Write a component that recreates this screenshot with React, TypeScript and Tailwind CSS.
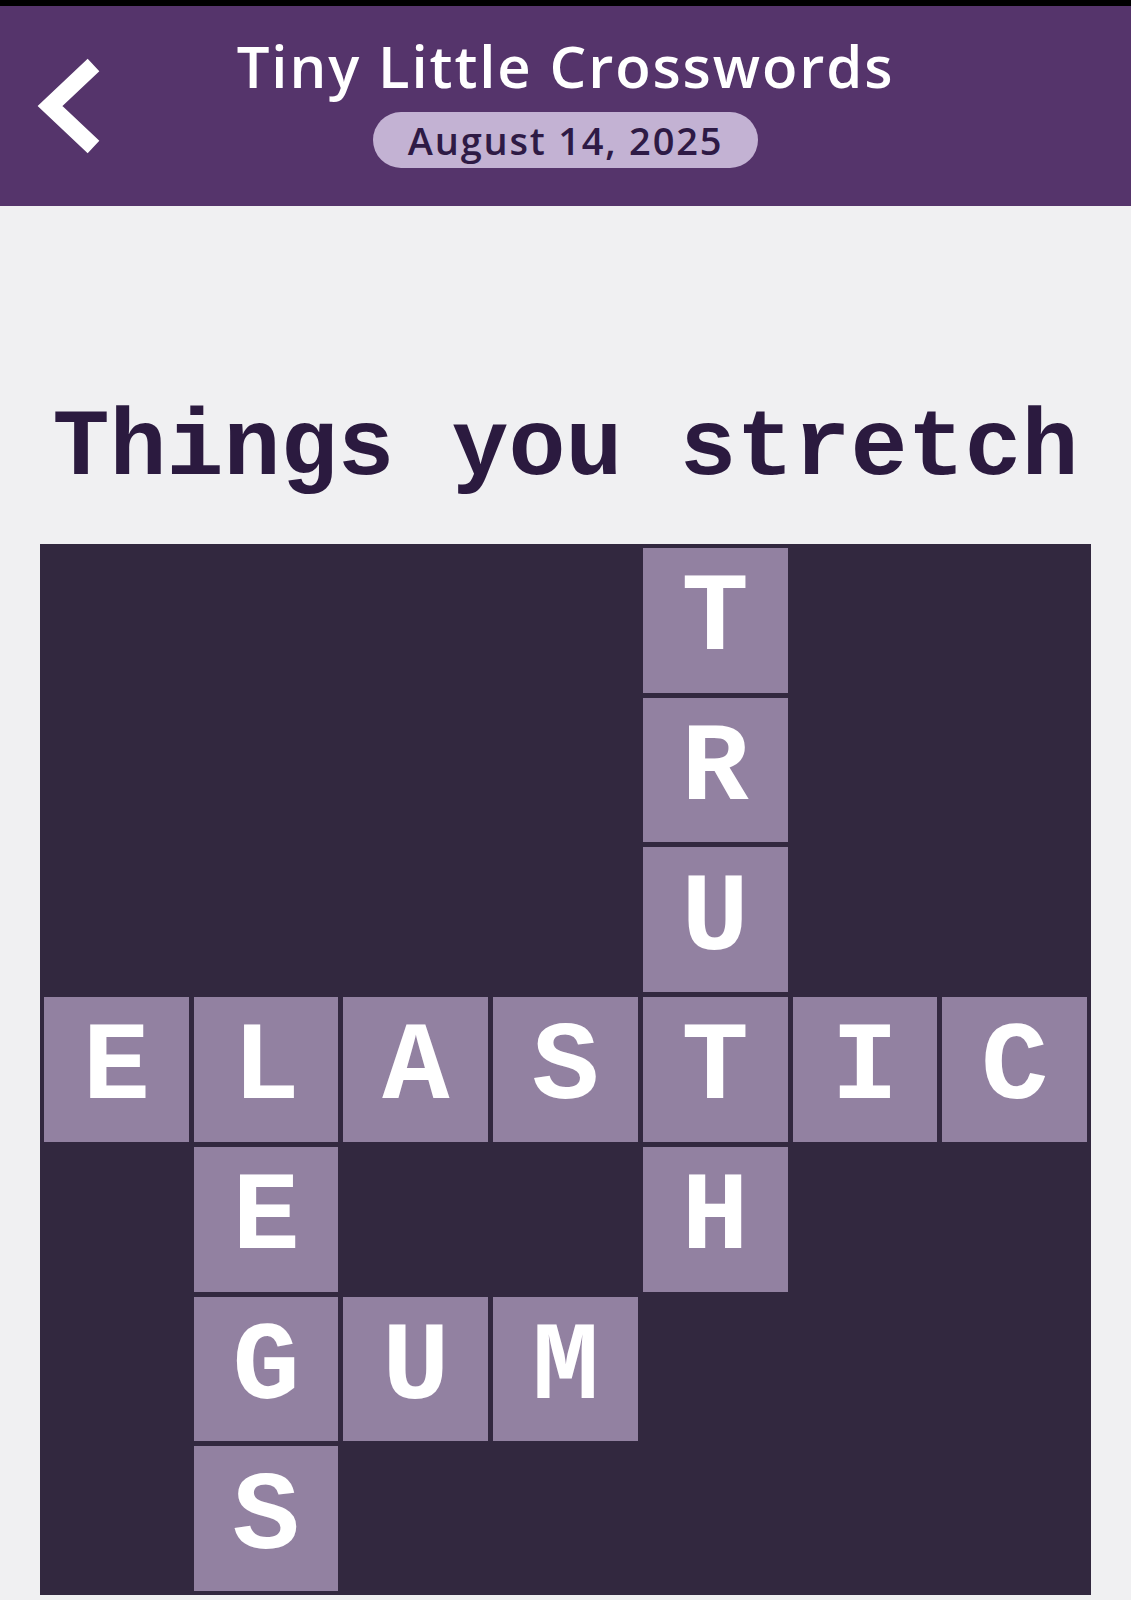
import React from "react";

// 7x7 puzzle layout; "." marks a blocked square
const ROWS = [
  "....T..",
  "....R..",
  "....U..",
  "ELASTIC",
  ".E..H..",
  ".GUM...",
  ".S.....",
];

function BackChevron() {
  return (
    <svg width="110" height="110" viewBox="0 0 110 110" className="block">
      <polyline
        points="93.5,12 50,53 93.5,94"
        fill="none"
        stroke="#ffffff"
        strokeWidth="17"
        strokeLinejoin="miter"
        strokeLinecap="butt"
      />
    </svg>
  );
}

function Header() {
  return (
    <header className="bg-[#55346b] pt-[31px] pb-[38px] grid grid-cols-[130px_1fr_130px] items-start">
      <button type="button" className="mt-[16px] ml-0 w-[110px] h-[110px]">
        <BackChevron />
      </button>
      <div className="flex flex-col items-center">
        <h1 className="text-white text-[58px] leading-none font-semibold tracking-[1.9px] font-['Open_Sans',sans-serif] whitespace-nowrap">
          Tiny Little Crosswords
        </h1>
        <div className="mt-[17px] w-[385px] h-[56px] rounded-full bg-[#c3b2d3] flex items-center justify-center">
          <span className="text-[#2e1a45] text-[38px] leading-none font-semibold tracking-[1.8px] font-['Open_Sans',sans-serif]">
            August 14, 2025
          </span>
        </div>
      </div>
      <div />
    </header>
  );
}

function Cell({ letter }: { letter: string }) {
  if (letter === ".") return <div />;
  return (
    <div className="bg-[#9281a1] flex items-center justify-center">
      <span className="text-white text-[112px] leading-none font-bold font-['Courier_New','Liberation_Mono',monospace]">
        {letter}
      </span>
    </div>
  );
}

export default function App() {
  return (
    <div className="w-[1131px] min-h-[1600px] bg-[#f0f0f2]">
      <div className="h-[6px] bg-black" />
      <Header />
      <main className="flex flex-col items-center">
        <h2 className="mt-[196px] text-[#2b1a3f] text-[95px] leading-none font-bold font-['Courier_New','Liberation_Mono',monospace] whitespace-nowrap">
          Things you stretch
        </h2>
        <div className="mt-[47px] w-[1051px] h-[1051px] bg-[#32283f] p-[4px] grid grid-cols-7 grid-rows-7 gap-[5px]">
          {ROWS.flatMap((row, r) =>
            row.split("").map((ch, c) => <Cell key={`${r}-${c}`} letter={ch} />)
          )}
        </div>
      </main>
    </div>
  );
}
